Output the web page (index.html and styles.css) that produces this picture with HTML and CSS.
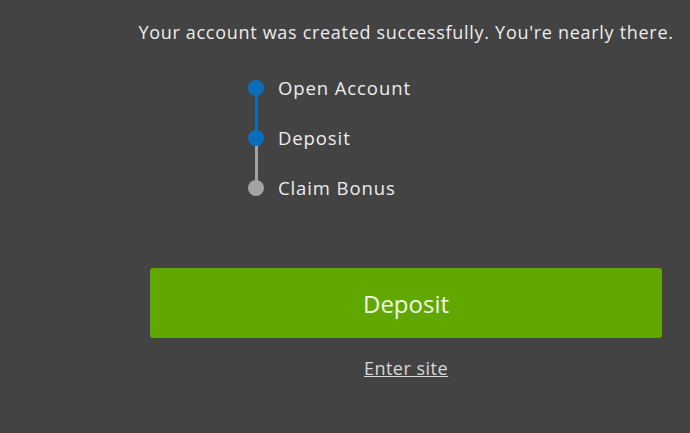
FILE: index.html
```html
<!DOCTYPE html>
<html lang="en">
<head>
    <meta charset="UTF-8">
    <meta name="viewport" content="width=device-width, initial-scale=1.0">
    <title>Account created</title>
    <link rel="stylesheet" href="styles.css">
</head>
<body>
    <div class="panel">
        <p class="msg">Your account was created successfully. You're nearly there.</p>
        <ul class="steps">
            <li class="step done">Open Account</li>
            <li class="step current">Deposit</li>
            <li class="step">Claim Bonus</li>
        </ul>
        <button class="deposit">Deposit</button>
        <a class="enter" href="#">Enter site</a>
    </div>
</body>
</html>
```

FILE: styles.css
```css
body { margin: 0; background: #434343; font-family: "Open Sans", Lato, sans-serif; color: #ececec; }
.panel { width: 512px; margin-left: 150px; display: flex; flex-direction: column; }
.msg { align-self: center; white-space: nowrap; margin: 20px 0 0; font-size: 18px; line-height: 24px; letter-spacing: 0.7px; }
.steps { list-style: none; margin: 19px 0 0 98px; padding: 0; align-self: flex-start; }
.step { position: relative; height: 50px; line-height: 50px; padding-left: 30px; font-size: 18.5px; letter-spacing: 0.9px; }
.step::before { content: ""; position: absolute; left: 0; top: 17px; width: 16px; height: 16px; border-radius: 50%; background: #a3a3a3; z-index: 1; }
.step.done::before, .step.current::before { background: #0a6ebd; }
.step:not(:last-child)::after { content: ""; position: absolute; left: 6.5px; top: 25px; width: 3px; height: 50px; background: #a3a3a3; }
.step.done::after { background: #0a6ebd; }
.deposit { margin-top: 55px; height: 70px; border: none; border-radius: 3px; background: #60a800; color: #f0f5e6; font-family: inherit; font-size: 24px; cursor: pointer; }
.enter { align-self: center; margin-top: 18px; color: #d8d8d8; font-size: 18px; text-decoration: underline; letter-spacing: 0.5px; }
```
